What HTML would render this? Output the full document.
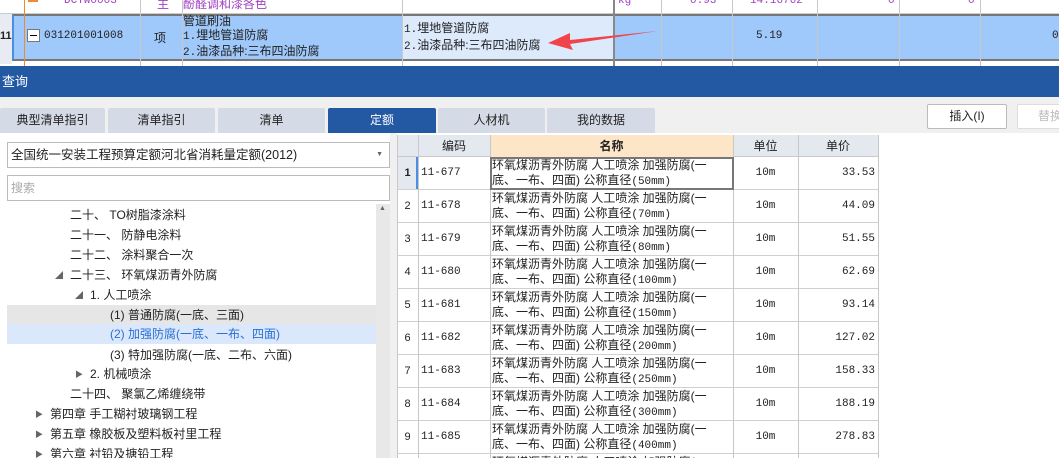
<!DOCTYPE html>
<html style="width:1059px;height:458px;overflow:hidden"><head><meta charset="utf-8"><style>
*{margin:0;padding:0;box-sizing:border-box}
body{width:1059px;height:458px;overflow:hidden;background:#fff;font-family:"Liberation Sans","Noto Sans CJK SC",sans-serif;font-size:12px;color:#222;position:relative}
.a{position:absolute}
.mono{font-family:"Liberation Mono","Noto Sans CJK SC",monospace;font-size:11px}
.vl{position:absolute;width:1px;background:#c8c8c8}
.tab{position:absolute;top:108px;height:25px;background:#d4dbe6;text-align:center;line-height:25px;font-size:12px;border-radius:2px 2px 0 0}
.tr{position:absolute;left:0;width:376px;height:20px;line-height:20px;font-size:12px;white-space:nowrap}
.tri{position:absolute;font-size:8px;color:#666}
.row{position:absolute;left:397px;width:482px;height:33px;border-bottom:1px solid #d0d0d0}
.row div{position:absolute;top:0;height:32px}
#clip{position:absolute;left:0;top:0;width:1059px;height:458px;overflow:hidden}
</style></head><body><div id="clip">
<div class="a" style="left:0;top:0;width:1059px;height:14px;background:#fff;border-bottom:1px solid #ccc"></div>
<div class="a mono" style="left:64px;top:-5px;color:#a040c0">DCTW0003</div>
<div class="a" style="left:157px;top:-5px;color:#a040c0">主</div>
<div class="a" style="left:183px;top:-5px;color:#a040c0">酚醛调和漆各色</div>
<div class="a mono" style="left:618px;top:-5px;color:#a040c0">kg</div>
<div class="a mono" style="left:690px;top:-5px;color:#a040c0">0.93</div>
<div class="a mono" style="left:750px;top:-5px;color:#a040c0">14.16762</div>
<div class="a mono" style="left:888px;top:-5px;color:#a040c0">0</div>
<div class="a mono" style="left:968px;top:-5px;color:#a040c0">0</div>
<div class="a" style="left:0;top:14px;width:12px;height:50px;background:#e8ecf2"></div>
<div class="a" style="left:0;top:30px;font-size:11px;font-weight:bold">11</div>
<div class="a" style="left:12px;top:14px;width:1047px;height:47px;background:#9fc8fb;border-top:2px solid #777;border-bottom:2px solid #777;border-left:2px solid #4a90e2"></div>
<div class="a" style="left:24px;top:0;width:1px;height:66px;background:#f08a30"></div>
<div class="a" style="left:28px;top:0;width:10px;height:2px;background:#f08a30"></div>
<div class="a" style="left:27px;top:29px;width:13px;height:13px;background:#fff;border:1px solid #777"></div>
<div class="a" style="left:30px;top:35px;width:7px;height:1px;background:#000"></div>
<div class="a mono" style="left:44px;top:30px">031201001008</div>
<div class="a" style="left:154px;top:29px">项</div>
<div class="a" style="left:183px;top:14px;line-height:14px;width:220px">管道刷油<br><span class="mono">1.</span>埋地管道防腐<br><span class="mono">2.</span>油漆品种:三布四油防腐</div>
<div class="a" style="left:402px;top:16px;width:212px;height:43px;background:#dceafc"></div>
<div class="a" style="left:404px;top:21px;line-height:15px"><span class="mono">1.</span>埋地管道防腐<br><span class="mono">2.</span>油漆品种:三布四油防腐</div>
<div class="a mono" style="left:756px;top:30px">5.19</div>
<div class="a mono" style="left:1052px;top:30px">0</div>
<div class="vl" style="left:140px;top:0;height:66px"></div>
<div class="vl" style="left:182px;top:0;height:66px"></div>
<div class="vl" style="left:402px;top:0;height:66px"></div>
<div class="a" style="left:613px;top:0;width:2px;height:66px;background:#888"></div>
<div class="vl" style="left:661px;top:0;height:66px"></div>
<div class="vl" style="left:732px;top:0;height:66px"></div>
<div class="vl" style="left:817px;top:0;height:66px"></div>
<div class="vl" style="left:899px;top:0;height:66px"></div>
<div class="vl" style="left:980px;top:0;height:66px"></div>
<svg class="a" style="left:540px;top:25px" width="120" height="30"><polygon points="118,6 30,19 33,25 8,18 30,8 30,15" fill="#f0444a"/></svg>
<div class="a" style="left:0;top:66px;width:1059px;height:31px;background:#2358a3;color:#fff;font-size:13px;line-height:31px;padding-left:2px">查询</div>
<div class="a" style="left:0;top:97px;width:1059px;height:36px;background:#f0f0f0"></div>
<div class="tab" style="left:0;width:105px">典型清单指引</div>
<div class="tab" style="left:108px;width:107px">清单指引</div>
<div class="tab" style="left:218px;width:107px">清单</div>
<div class="tab" style="left:328px;width:108px;background:#2358a3;color:#fff">定额</div>
<div class="tab" style="left:438px;width:107px">人材机</div>
<div class="tab" style="left:547px;width:108px">我的数据</div>
<div class="a" style="left:927px;top:104px;width:80px;height:25px;border:1px solid #bbb;border-radius:2px;background:#fff;text-align:center;line-height:23px">插入(I)</div>
<div class="a" style="left:1017px;top:104px;width:50px;height:25px;border:1px solid #ddd;border-radius:2px;background:#fff;line-height:23px;padding-left:20px;color:#bbb">替换</div>
<div class="a" style="left:7px;top:142px;width:383px;height:26px;border:1px solid #bbb;line-height:24px;padding-left:3px;font-size:12.5px">全国统一安装工程预算定额河北省消耗量定额(2012)<span style="position:absolute;right:6px;font-size:7px;color:#666">▼</span></div>
<div class="a" style="left:7px;top:175px;width:383px;height:26px;border:1px solid #bbb;line-height:24px;padding-left:3px;color:#aaa">搜索</div>
<div class="a" style="left:376px;top:204px;width:14px;height:254px;background:#e8e8e8"></div>
<div class="a" style="left:379px;top:205px;font-size:7px;color:#666">▲</div>
<div class="a" style="left:390px;top:133px;width:7px;height:325px;background:#f0f0f0"></div>
<div class="a" style="left:7px;top:305px;width:369px;height:19px;background:#e6e6e6"></div>
<div class="a" style="left:7px;top:324px;width:369px;height:20px;background:#dbe8fb"></div>
<div class="tr" style="top:205px;left:70px">二十、 TO树脂漆涂料</div>
<div class="tr" style="top:225px;left:70px">二十一、 防静电涂料</div>
<div class="tr" style="top:245px;left:70px">二十二、 涂料聚合一次</div>
<div class="tri" style="left:55px;top:270px">◢</div>
<div class="tr" style="top:265px;left:70px">二十三、 环氧煤沥青外防腐</div>
<div class="tri" style="left:75px;top:290px">◢</div>
<div class="tr" style="top:285px;left:90px">1. 人工喷涂</div>
<div class="tr" style="top:305px;left:110px">(1) 普通防腐(一底、三面)</div>
<div class="tr" style="top:324px;left:110px;color:#2a6fd6">(2) 加强防腐(一底、一布、四面)</div>
<div class="tr" style="top:345px;left:110px">(3) 特加强防腐(一底、二布、六面)</div>
<div class="tri" style="left:75px;top:369px">▶</div>
<div class="tr" style="top:364px;left:90px">2. 机械喷涂</div>
<div class="tr" style="top:384px;left:70px">二十四、 聚氯乙烯缠绕带</div>
<div class="tri" style="left:35px;top:409px">▶</div>
<div class="tr" style="top:404px;left:50px">第四章 手工糊衬玻璃钢工程</div>
<div class="tri" style="left:35px;top:429px">▶</div>
<div class="tr" style="top:424px;left:50px">第五章 橡胶板及塑料板衬里工程</div>
<div class="tri" style="left:35px;top:449px">▶</div>
<div class="tr" style="top:444px;left:50px">第六章 衬铅及搪铅工程</div>
<div class="a" style="left:397px;top:135px;width:482px;height:22px;background:#e4e9f0;border-bottom:1px solid #c8c8c8"></div>
<div class="a" style="left:490px;top:135px;width:243px;height:22px;background:#fde5c8"></div>
<div class="a" style="left:418px;top:135px;width:72px;text-align:center;line-height:22px">编码</div>
<div class="a" style="left:490px;top:135px;width:243px;text-align:center;line-height:22px;font-weight:bold">名称</div>
<div class="a" style="left:733px;top:135px;width:65px;text-align:center;line-height:22px">单位</div>
<div class="a" style="left:798px;top:135px;width:80px;text-align:center;line-height:22px">单价</div>
<div class="a" style="left:397px;top:157px;width:21px;height:301px;background:#fff"></div>
<div class="a" style="left:397px;top:157px;width:21px;height:33px;background:#e4e9f0;border-right:2px solid #4a90e2"></div>
<div id="rows"></div>
<div class="vl" style="left:397px;top:135px;height:323px"></div>
<div class="vl" style="left:418px;top:135px;height:323px"></div>
<div class="vl" style="left:490px;top:135px;height:323px"></div>
<div class="vl" style="left:733px;top:135px;height:323px"></div>
<div class="vl" style="left:798px;top:135px;height:323px"></div>
<div class="vl" style="left:878px;top:135px;height:323px"></div>
<div class="a" style="left:490px;top:157px;width:244px;height:33px;border:2px solid #777"></div>
</div>
<script>
var d=["50","70","80","100","150","200","250","300","400","500"],p=["33.53","44.09","51.55","62.69","93.14","127.02","158.33","188.19","278.83",""],h="";
for(var i=0;i<10;i++){var t=157+33*i;
h+='<div class="row" style="top:'+t+'px"><div style="left:0;width:21px;text-align:center;line-height:32px;font-size:11px;'+(i==0?'font-weight:bold':'')+'">'+(i+1)+'</div>'+
'<div class="mono" style="left:24px;line-height:32px">11-'+(677+i)+'</div>'+
'<div style="left:95px;top:1px;width:240px;line-height:15px;font-size:12px">环氧煤沥青外防腐 人工喷涂 加强防腐(一<br>底、一布、四面) 公称直径<span class="mono">('+d[i]+'mm)</span></div>'+
'<div class="mono" style="left:336px;width:65px;text-align:center;line-height:32px">10m</div>'+
'<div class="mono" style="left:401px;width:77px;text-align:right;line-height:32px">'+p[i]+'</div></div>';}
document.getElementById("rows").innerHTML=h;
</script>
</body></html>
